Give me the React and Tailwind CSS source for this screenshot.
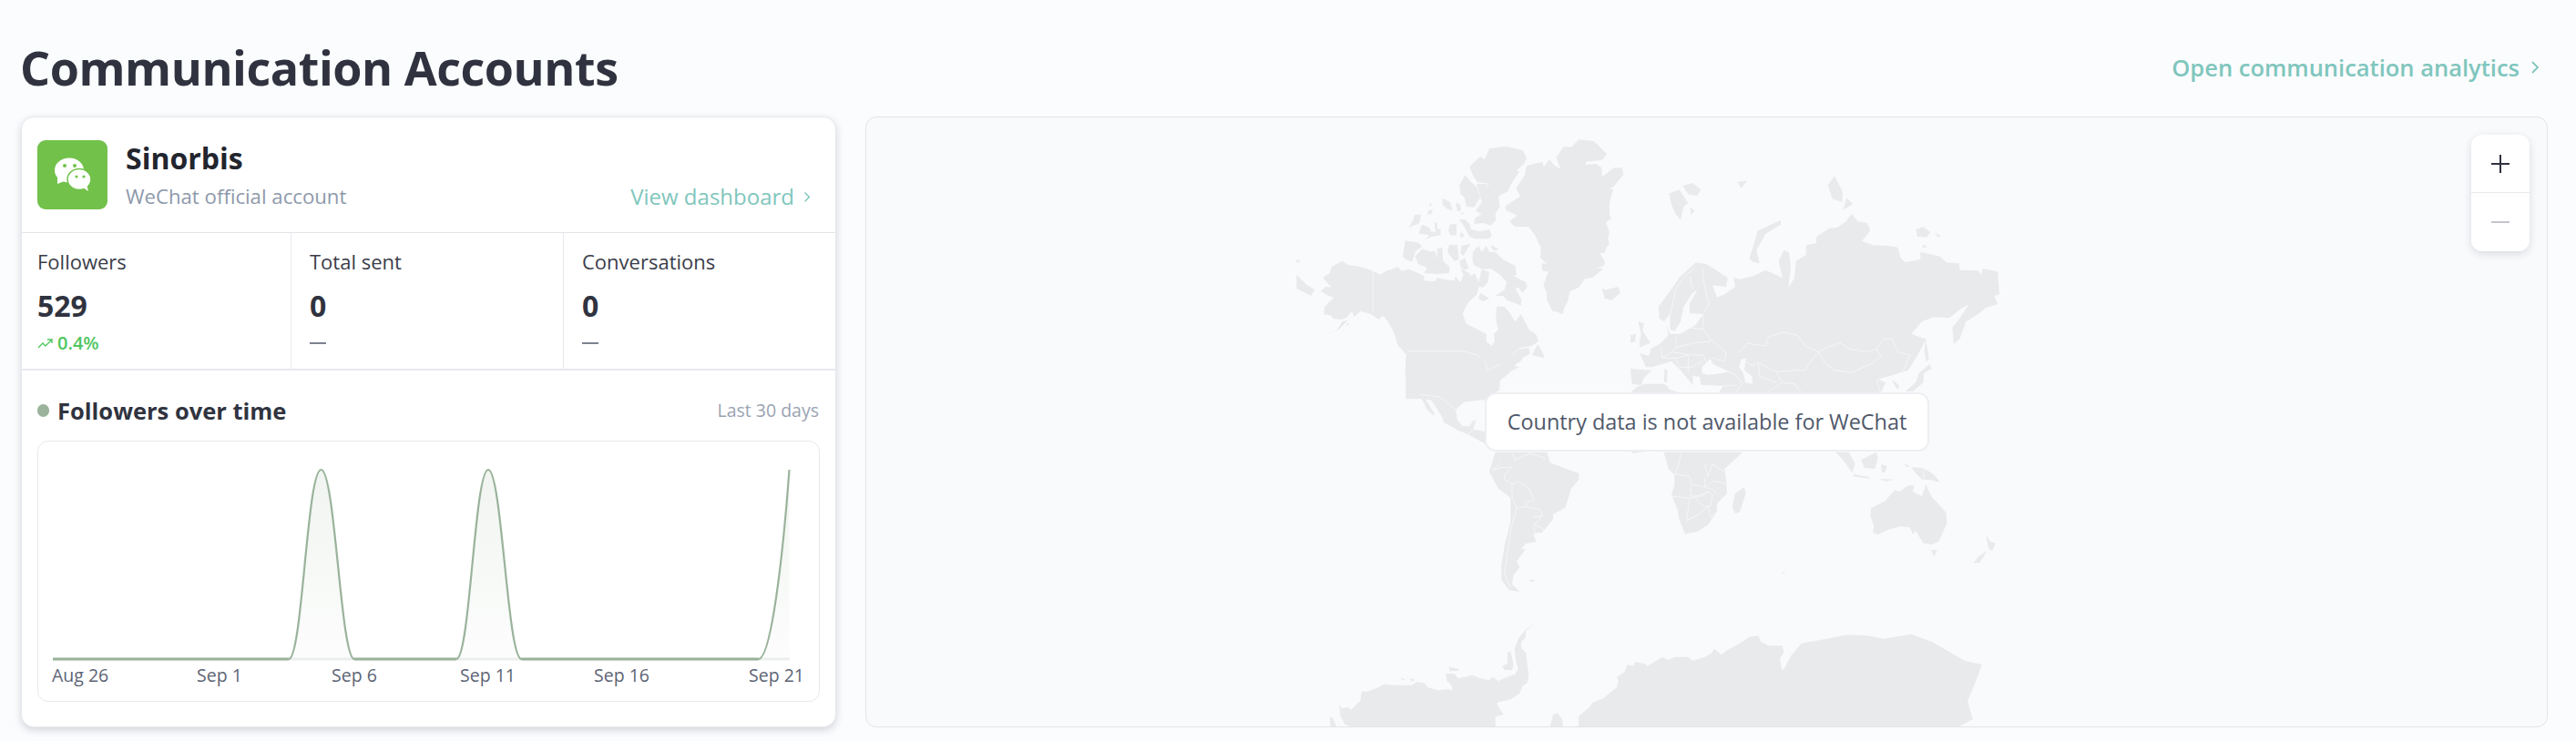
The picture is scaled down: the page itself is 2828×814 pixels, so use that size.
import React from "react";

const LAND = "#e9eaec";
const SEA = "#f9fafc";

// map outlines, each group in the pixel frame of its own crop
const groups = [
  {
    t: "translate(1415 145) scale(0.3333)",
    land: [
      "930,50 955,25 1005,30 1047,72 1032,92 978,98 978,108 1012,105 1030,118 1032,148 1070,118 1098,118 1102,140 1070,180 1058,186 1068,190 1056,235 1056,270 1062,286 1044,298 1056,330 1050,352 1056,368 1046,380 1040,398 1024,398 1042,430 1036,442 1012,448 1036,450 1000,480 975,484 955,512 925,526 918,560 908,575 902,600 880,592 868,590 850,555 848,525 838,505 855,460 835,458 832,432 850,435 828,415 830,380 810,340 790,313 745,312 726,295 752,275 715,258 712,245 762,212 748,185 778,140 782,112 835,98 840,115 858,90 875,110 895,122 880,85 905,48",
      "595,115 630,80 645,90 660,55 690,50 715,47 770,60 783,85 775,105 750,125 758,132 730,175 722,195 690,212 695,245 680,270 682,290 665,308 640,300 610,303 612,285 635,270 615,260 635,230 628,205 618,170 655,172 645,186 660,170 620,165 605,140",
      "580,142 600,165 618,180 630,215 610,248 585,245 578,215 565,205 562,175",
      "560,288 580,288 595,302 600,320 625,328 660,322 668,340 660,352 615,352 595,345 578,312",
      "505,218 530,230 540,258 518,252 506,238",
      "550,232 565,240 567,258 555,262",
      "565,264 578,268 570,272",
      "530,305 552,302 552,340 535,342 525,325",
      "568,330 578,340 570,350 562,342",
      "462,235 474,240 464,245",
      "460,258 474,255 470,270 456,272",
      "415,272 435,272 430,300 395,315 410,288",
      "438,305 462,315 470,330 484,328 478,298 488,300 490,322 500,318 500,340 470,345 450,355 462,340 428,335",
      "383,358 428,365 438,378 418,392 405,428 385,420 375,410",
      "440,385 468,395 480,390 490,418 488,385 505,380 508,425 530,445 528,465 490,468 445,465 455,448 425,435 420,420 415,410",
      "528,372 555,372 560,420 545,425 522,395",
      "568,375 598,368 575,408 565,400",
      "563,425 580,415 592,450 578,455 565,445",
      "605,395 625,375 635,395 650,375 660,395 680,395 705,420 745,440 750,470 740,475 780,495 785,510 770,530 755,512 745,515 765,550 765,572 720,555 705,540 680,540 710,520 718,495 695,470 665,450 640,452 610,440 605,425",
      "665,372 690,385 680,392 668,385",
      "630,530 660,548 640,558 625,550",
      "112,480 135,465 140,445 175,425 195,438 230,443 270,455 300,470 320,458 340,452 358,445 372,458 395,452 425,465 445,475 445,490 480,492 490,480 510,485 545,490 548,475 565,495 575,470 565,450 595,465 600,475 612,465 625,495 635,452 660,462 655,495 640,512 625,510 620,535 600,552 585,570 572,600 585,632 610,645 640,660 650,665 650,690 668,705 678,690 675,665 690,650 682,620 684,575 710,575 730,600 745,625 765,600 785,640 790,650 815,668 822,690 800,705 760,712 740,730 725,755 650,795 650,765 620,735 570,722 395,722 395,745 370,715 360,705 345,660 330,630 310,605 295,618 270,600 235,590 215,610 208,590 190,612 172,618 145,615 140,605 115,600 118,575 148,545 130,540 105,525 120,510 140,512",
      "175,625 160,650 128,666 165,650 195,620",
      "385,740 395,722 570,722 620,735 650,765 650,795 690,772 725,755 735,770 760,775 705,800 690,820 695,850 660,870 660,880 385,880",
      "800,735 820,700 840,735 840,745",
      "725,745 760,715 790,712 795,730 770,745 760,760 740,760",
      "25,420 40,425 25,432",
      "25,470 60,505 85,520 72,540 25,515",
      "190,630 200,632 192,640",
      "1030,515 1045,520 1085,510 1092,530 1062,555 1040,548 1035,530",
      "1125,780 1195,785 1170,810 1160,835 1130,830",
      "1130,858 1170,845 1235,830 1250,840 1245,858",
      "1420,858 1440,835 1475,830 1470,858",
    ],
    sea: [],
    lines: [
      "277,455 277,595",
      "395,722 570,722 620,735 650,765 650,795 690,772 725,755",
      "1230,670 1240,690 1225,725 1245,740 1290,730 1330,730 1335,700 1385,685 1440,720 1435,745",
      "1225,725 1210,760 1270,745 1320,745 1340,765 1370,740",
      "1275,670 1275,710 1260,735 1290,750 1300,790 1320,830",
      "1335,660 1330,700 1360,650 1385,680",
      "1175,780 1225,785 1255,770",
      "1260,765 1300,800 1370,790",
    ],
  },
  {
    t: "translate(1790 190) scale(0.3333)",
    land: [
      "92,440 130,390 160,345 215,295 250,300 320,345 315,375 270,370 285,410 310,400 345,375 340,345 360,350 405,340 445,320 500,345 488,290 505,255 522,262 528,310 520,380 540,345 545,290 578,270 578,238 612,232 612,210 655,182 680,180 710,160 728,135 750,160 780,165 790,190 762,225 800,238 850,240 880,245 890,280 905,295 955,285 955,260 1020,275 1040,295 1082,298 1085,320 1145,322 1155,335 1160,315 1210,325 1215,400 1198,405 1210,432 1170,445 1145,465 1105,490 1085,545 1065,565 1060,510 1085,478 1115,432 1085,450 1050,478 1000,475 960,490 925,530 965,545 975,545 970,555 940,610 915,650 885,660 815,680 840,690 825,726 345,726 290,726 305,702 232,698 228,672 205,668 205,700 190,680 165,650 135,620 105,630 70,640 50,640 40,615 30,595 60,602 68,578 95,565 125,535 118,505 130,530 165,530 215,500 240,465 195,462 195,430 220,385 205,395 175,440 165,490 145,522 130,515 130,465 110,490 95,480",
      "25,490 45,495 40,520 65,560 30,575 30,555 35,530",
      "0,535 18,530 15,555 0,560",
      "112,645 122,650 120,690 110,690",
      "0,725 20,705 50,695 110,695 125,712 165,726",
      "127,68 160,55 190,100 175,110 165,155 148,135 135,105",
      "172,42 205,33 232,55 220,75 190,70",
      "195,112 212,125 200,138",
      "352,30 385,25 365,50",
      "392,280 420,190 495,155 495,170 445,200 415,255 425,298 400,292",
      "650,40 672,10 698,60 698,97 665,85",
      "712,82 733,102 700,122",
      "940,185 965,178 988,195 975,212 945,210",
      "1000,197 1022,207 1015,212",
      "965,235 978,245 960,247",
      "972,545 983,610 975,625 968,590",
      "985,630 992,645 965,660 965,690 930,720 905,720 940,690 950,660",
      "860,680 885,700 880,715 870,700",
    ],
    sea: [
      "365,615 380,610 375,650 400,670 402,695 378,690 372,660 358,640",
      "235,640 262,612 272,630 325,655 300,660 255,665 235,660",
    ],
    lines: [
      "360,590 385,562 445,570 455,540 505,525 550,535 575,570 620,590 590,625 575,650 545,650 480,655 420,625 405,635 360,615",
      "620,590 650,575 690,560 720,580 780,590 810,580 825,605 790,630 730,658 670,650 640,625 620,590",
      "810,580 830,550 860,545 880,590 920,600 900,650 885,660",
      "480,655 500,690 450,726",
      "500,690 540,695 565,726",
      "420,625 425,670 480,690",
      "215,310 180,340 150,380 135,450 130,470",
      "240,315 240,350 250,400 260,430 240,460",
      "195,340 205,385",
      "240,465 240,515 265,550 315,590 310,620 270,610",
      "195,510 240,515",
      "150,540 150,575 210,560 265,555",
      "150,575 135,590 205,600 240,600 250,625",
      "100,570 105,610 135,590",
      "105,610 150,610 190,600 190,660",
      "150,610 160,640 205,640 235,620",
      "320,655 345,665 370,695 345,726",
      "350,700 300,702",
      "825,726 810,680",
    ],
  },
  {
    t: "translate(1530 400) scale(0.3333)",
    land: [
      "40,-20 38,30 55,70 85,100 110,150 128,168 135,165 105,115 125,120 160,175 165,192 215,220 245,232 300,262 320,280 320,240 300,222 262,215 272,183 260,188 250,205 228,205 210,185 205,150 230,125 290,118 330,120 335,90 350,70 350,55 380,30 420,-20",
    ],
    sea: [],
    lines: ["85,100 150,108 175,125 205,150", "245,232 262,215", "300,-10 310,20 350,0"],
  },
  {
    t: "translate(1560 490) scale(0.3333)",
    land: [
      "245,20 225,85 255,140 295,170 295,250 275,330 265,390 265,440 290,475 325,480 300,455 305,425 325,400 315,380 345,340 330,340 345,322 380,315 370,290 400,285 435,240 435,225 475,203 495,140 520,110 520,90 465,70 425,55 415,20",
      "358,442 375,440 372,446 360,447",
      "1192,415 1200,418 1192,422",
      "800,20 815,75 835,95 835,130 825,160 845,210 850,240 870,290 910,282 945,260 975,215 975,190 1008,155 1005,110 1000,75 1060,20",
      "1065,135 1070,155 1050,218 1035,222 1025,200 1035,155",
      "690,18 735,18 700,24",
    ],
    sea: [],
    lines: [
      "300,25 310,45 360,25 410,40",
      "265,55 235,80 270,70 300,70 275,95 275,110 300,125 325,118 355,140 375,180 345,185 345,200 375,205 395,210 400,230 370,235",
      "300,125 300,170 315,205 345,200",
      "315,205 305,240 295,280 285,350 275,420 295,470",
      "375,260 405,275 400,288 375,285 372,260 400,230",
      "855,25 850,60 835,92 885,100 890,125 935,135 965,115 1005,125",
      "935,105 935,135 965,145 975,160",
      "825,165 885,172 905,168 945,150 960,160 955,195 930,200 905,170",
      "885,172 875,245 915,225 945,200",
      "890,125 888,165 925,165 945,150",
      "935,60 945,100 960,60 1000,85",
      "945,200 955,235 975,215",
    ],
  },
  {
    t: "translate(1980 490) scale(0.3333)",
    land: [
      "105,20 150,20 170,60 160,88 130,45",
      "190,45 240,20 245,40 235,75 200,72",
      "255,60 275,65 270,85 258,88",
      "165,92 220,103 215,107 165,100",
      "355,70 395,72 430,95 450,120 420,112 390,110 370,90",
      "250,108 300,110 270,116",
      "330,58 350,65 340,70",
      "222,205 270,180 300,145 315,150 345,130 365,130 360,150 390,165 403,125 420,165 470,220 472,255 445,315 420,325 395,320 370,280 360,290 350,268 320,265 280,275 245,292 228,285 232,265 220,230",
      "420,343 440,343 430,365",
      "600,292 615,315 632,320 622,345 610,340",
      "605,345 580,385 560,385 575,365",
    ],
    sea: [],
    lines: ["396,72 396,110"],
  },
  {
    t: "translate(1440 670) scale(0.3333)",
    land: [
      "60,352 72,358 82,387 62,387",
      "90,312 100,325 120,320 128,330 160,300 165,268 180,270 205,262 238,245 280,248 330,248 345,238 370,240 382,255 415,265 450,262 465,265 458,245 445,235 442,210 470,210 482,225 510,220 530,215 555,225 585,232 595,220 615,235 640,222 670,212 680,195 672,165 668,130 680,95 705,65 735,45 705,70 705,90 690,105 690,125 705,140 715,215 710,240 695,250 685,275 655,295 610,305 615,320 632,345 605,352 605,387 140,387 110,378 95,350",
      "452,188 485,195 485,200 455,202",
      "290,222 310,230 300,232",
      "322,225 340,228 332,238",
      "628,185 645,178 645,140 655,135 665,180 660,198 635,198",
      "785,387 795,345 810,340 825,360 828,387",
      "878,387 880,350 915,320 925,305 960,292 1005,255 1010,235 1005,222 1030,205 1040,180 1060,185 1065,172 1100,178 1105,185 1155,155 1175,165 1195,155 1240,155 1255,168 1295,155 1320,140 1325,128 1350,148 1365,135 1410,110 1440,90 1470,85 1480,105 1505,118 1550,118 1555,140 1542,158 1548,195 1560,200 1560,387",
    ],
    sea: [],
    lines: [],
  },
  {
    t: "translate(1380 470) scale(0.5612 0.3333)",
    land: [
      "1030,798 1045,750 1065,710 1100,700 1155,682 1195,685 1225,695 1280,680 1320,705 1385,768 1418,780 1405,840 1390,900 1400,960 1370,988 1030,988",
    ],
    sea: [],
    lines: [],
  },
];

function WorldMap() {
  return (
    <svg
      className="absolute inset-0 h-full w-full"
      viewBox="951 129 1845 669"
      preserveAspectRatio="none"
    >
      {groups.map((g, i) => (
        <g key={i} transform={g.t}>
          {g.land.map((p, j) => (
            <polygon key={j} points={p} fill={LAND} />
          ))}
          {g.sea.map((p, j) => (
            <polygon key={j} points={p} fill={SEA} />
          ))}
          {g.lines.map((p, j) => (
            <polyline key={j} points={p} fill="none" stroke={SEA} strokeWidth="2.2" />
          ))}
        </g>
      ))}
    </svg>
  );
}

function WechatLogo() {
  return (
    <svg width="77" height="76" viewBox="0 0 77 76" className="shrink-0">
      <rect width="77" height="76" rx="9" fill="#72c14b" />
      <ellipse cx="35" cy="33" rx="16" ry="13.5" fill="#fff" />
      <polygon points="22,39 22,48 32,44" fill="#fff" />
      <circle cx="30" cy="28" r="2" fill="#72c14b" />
      <circle cx="41" cy="28" r="2" fill="#72c14b" />
      <ellipse cx="46" cy="43" rx="13" ry="11.5" fill="#fff" stroke="#72c14b" strokeWidth="1.5" />
      <polygon points="50,52 56,56 54,48" fill="#fff" />
      <circle cx="43" cy="40" r="1.6" fill="#72c14b" />
      <circle cx="51" cy="40" r="1.6" fill="#72c14b" />
    </svg>
  );
}

function Chevron({ size }) {
  return (
    <svg width={size} height={size * 1.6} viewBox="0 0 10 16" fill="none" stroke="currentColor" strokeWidth="1.8">
      <path d="M2 2l6 6-6 6" />
    </svg>
  );
}

function Stat({ label, value, children, border, first }) {
  return (
    <div className={`pt-[18px] ${first ? "pl-[17px]" : "pl-[20px]"} ${border ? "border-r border-[#e8e9ed]" : ""}`}>
      <div className="text-[22px] leading-[26px] text-[#3a3d49]">{label}</div>
      <div className="mt-[16px] text-[32px] leading-[40px] font-bold text-[#30333f]">{value}</div>
      <div className="mt-[9px] flex h-[24px] items-center">{children}</div>
    </div>
  );
}

function Dash() {
  return <div className="h-[2px] w-[18px] bg-[#7c828f]" />;
}

const ticks = [
  ["Aug 26", 15],
  ["Sep 1", 174],
  ["Sep 6", 322],
  ["Sep 11", 463],
  ["Sep 16", 610],
  ["Sep 21", 780],
];

function FollowersChart() {
  const line =
    "M275 239C290 239 295 31 310.5 31C326 31 332 239 347 239L459 239C474 239 479 31 494 31C509 31 515 239 530.5 239L790.5 239C805 239 818 120 824.5 31";
  return (
    <svg width="855" height="285" className="block">
      <defs>
        <linearGradient id="fade" x1="0" y1="0" x2="0" y2="1">
          <stop offset="0" stopColor="#9ab39b" stopOpacity="0.14" />
          <stop offset="1" stopColor="#9ab39b" stopOpacity="0.03" />
        </linearGradient>
      </defs>
      <path d={`${line}L824.5 239Z`} fill="url(#fade)" />
      <path d="M16 239H825" stroke="#eceded" strokeWidth="3" />
      <path d="M16 239H275M347 239H459M530.5 239H790.5" stroke="#9ab39b" strokeWidth="3" />
      <path d={line} fill="none" stroke="#9ab39b" strokeWidth="2.2" />
      {ticks.map(([t, x]) => (
        <text key={t} x={x} y="264" fontSize="19.5" fontWeight="500" fill="#5c6474">
          {t}
        </text>
      ))}
    </svg>
  );
}

export default function App() {
  return (
    <div className="flex h-[814px] flex-col bg-[#fbfcfe] pl-[23px] pr-[31px] font-['Open_Sans',sans-serif]">
      <div className="flex h-[128px] shrink-0 items-center justify-between pt-[20px]">
        <h1 className="-ml-px text-[52px] leading-none font-bold tracking-[-0.45px] text-[#30333f]">Communication Accounts</h1>
        <a className="mr-[9px] flex items-center gap-[12px] text-[25.5px] font-semibold text-[#7fc6bd]">
          Open communication analytics
          <Chevron size={10} />
        </a>
      </div>
      <div className="flex h-[671px] gap-[32px]">
        <div className="flex w-[895px] shrink-0 flex-col rounded-[14px] border border-[#e8e9ed] bg-white shadow-[0_3px_8px_rgba(30,35,50,0.18)]">
          <div className="flex h-[127px] shrink-0 gap-[20px] border-b border-[#e3e4e8] pl-[17px] pr-[27px] pt-[25px]">
            <WechatLogo />
            <div className="flex flex-1 flex-col">
              <div className="mt-[1px] text-[32px] leading-[38px] font-bold text-[#22252e]">Sinorbis</div>
              <div className="mt-[7px] flex items-center justify-between">
                <span className="text-[22.2px] leading-[32px] text-[#8e99ab]">WeChat official account</span>
                <a className="flex items-center gap-[10px] text-[24px] leading-[32px] font-medium text-[#7fc6bd]">
                  View dashboard
                  <Chevron size={8} />
                </a>
              </div>
            </div>
          </div>
          <div className="grid h-[151px] shrink-0 grid-cols-[296px_299px_1fr] border-b-2 border-[#e8e9ed]">
            <Stat label="Followers" value="529" border first>
              <svg width="18" height="14" viewBox="0 0 18 14" fill="none" stroke="#4fc65f" strokeWidth="1.4">
                <path d="M1 12l5-5 3 3 7-7M11 3h5v4" />
              </svg>
              <span className="ml-[4px] text-[20px] font-semibold text-[#4fc65f]">0.4%</span>
            </Stat>
            <Stat label="Total sent" value="0" border>
              <Dash />
            </Stat>
            <Stat label="Conversations" value="0">
              <Dash />
            </Stat>
          </div>
          <div className="flex flex-1 flex-col px-[17px] pt-[26px]">
            <div className="flex items-center">
              <span className="h-[14px] w-[13px] rounded-full bg-[#9ab39b]" />
              <span className="ml-[9px] text-[25.5px] leading-[36px] font-bold text-[#30333f]">Followers over time</span>
              <span className="ml-auto mr-[1px] text-[19.5px] text-[#9aa3b2]">Last 30 days</span>
            </div>
            <div className="mt-[15px] h-[287px] rounded-[12px] border border-[#e8e9ed] bg-white">
              <FollowersChart />
            </div>
          </div>
        </div>
        <div className="relative flex-1 overflow-hidden rounded-[12px] border border-[#e3e4e8] bg-[#f9fafc]">
          <WorldMap />
          <div className="absolute left-[679px] top-[302px] flex h-[65px] w-[488px] items-center justify-center rounded-[12px] border-2 border-[#eeeff2] bg-white text-[23.4px] font-medium text-[#4f586a]">
            Country data is not available for WeChat
          </div>
          <div className="absolute right-[19px] top-[19px] flex w-[64px] flex-col rounded-[12px] bg-white shadow-[0_3px_10px_rgba(30,35,50,0.14)]">
            <button className="flex h-[64px] items-center justify-center border-b border-[#e8e9ed]">
              <svg width="20" height="20" viewBox="0 0 20 20" stroke="#30333f" strokeWidth="2">
                <path d="M10 0v20M0 10h20" />
              </svg>
            </button>
            <button className="flex h-[64px] items-center justify-center">
              <svg width="20" height="20" viewBox="0 0 20 20" stroke="#c3c5cb" strokeWidth="2">
                <path d="M0 10h20" />
              </svg>
            </button>
          </div>
        </div>
      </div>
    </div>
  );
}
